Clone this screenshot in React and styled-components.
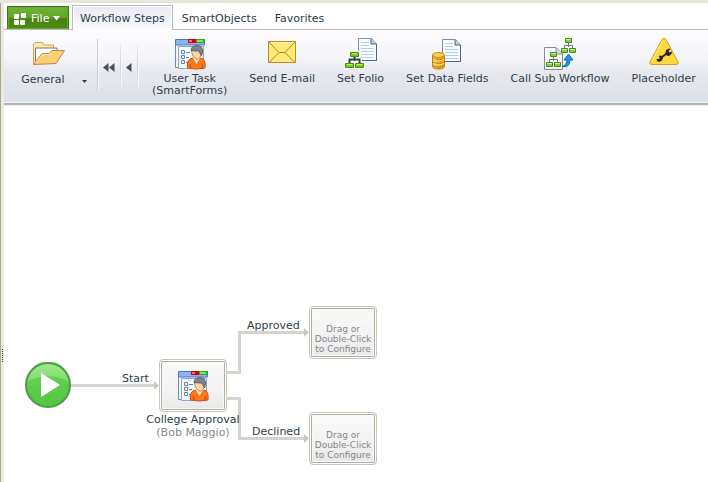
import React from "react";
import styled, { createGlobalStyle } from "styled-components";

const GlobalStyle = createGlobalStyle`
  * { box-sizing: border-box; }
  body {
    margin: 0;
    background: #fff;
    color: #2e3d47;
    font: 11px/12px Verdana, "DejaVu Sans", sans-serif;
  }
  button { font: inherit; color: inherit; margin: 0; cursor: pointer; }
`;

const Page = styled.div`
  display: flex;
  min-height: 100vh;
  border-top: 3px solid #e7e6da;
`;

const Splitter = styled.div`
  flex: none;
  display: flex;
  align-items: flex-end;
  width: 4px;
  padding-bottom: 119px;
  background: #ece9df;
  border-left: 1px solid #aaa899;
`;

const Grip = styled.span`
  width: 1px;
  height: 14px;
  margin-left: 1px;
  background: repeating-linear-gradient(#333 0 1px, #ece9df 1px 2px);
`;

const Designer = styled.div`
  flex: 1;
  min-width: 0;
  display: flex;
  flex-direction: column;
`;

const TabBar = styled.nav`
  display: flex;
  align-items: flex-end;
  height: 27px;
  padding-left: 3px;
  border-bottom: 1px solid #b9babb;
`;

const FileButton = styled.button`
  display: flex;
  align-items: center;
  gap: 4px;
  width: 62px;
  height: 23px;
  margin-right: 3px;
  padding: 1px 5px 0;
  color: #fff;
  border: 1px solid #3f7d16;
  border-bottom: 0;
  background: linear-gradient(#72b23a, #62a52b 45%, #478411 55%, #4b8814);
  box-shadow: inset 0 0 0 1px #65a72f;
`;

const Tab = styled.button`
  height: ${(p) => (p.$active ? 25 : 24)}px;
  margin-bottom: ${(p) => (p.$active ? -1 : 0)}px;
  padding: 2px ${(p) => (p.$active ? 7 : 8)}px 0;
  border: 1px solid ${(p) => (p.$active ? "#b9babb" : "transparent")};
  border-bottom: 0;
  background: ${(p) => (p.$active ? "linear-gradient(#e8eaf1, #fafaff)" : "none")};
  box-shadow: ${(p) => (p.$active ? "inset 0 0 0 1px #fff" : "none")};
`;

const Ribbon = styled.div`
  display: flex;
  align-items: flex-start;
  height: 75px;
  padding-top: 8px;
  overflow: hidden;
  background: linear-gradient(#fffcff, #f4f5f9 38%, #e6e8ee 60%, #dce1e7);
  border-bottom: 2px solid #b5b5b6;
  box-shadow: inset 0 -1px #f5f5f6, 0 1px #ededed;
`;

const Category = styled.button`
  display: grid;
  grid-template-columns: 78px 1fr;
  grid-template-rows: 33px 12px;
  align-items: start;
  justify-items: center;
  width: 93px;
  padding: 3px 0 0;
  border: 0;
  background: none;
  svg:first-child { grid-column: 1 / -1; justify-self: start; margin-left: 28px; }
`;

const CategoryArrow = styled.svg`
  align-self: center;
  justify-self: start;
  margin-top: 3px;
`;

const Divider = styled.span`
  width: 1px;
  height: ${(p) => (p.$tall ? 52 : 44)}px;
  margin-top: ${(p) => (p.$tall ? 1 : 5)}px;
  background: ${(p) =>
    p.$tall ? "#c5ced5" : "linear-gradient(#eef0f5, #cbd2d9 50%, #e3e6ec)"};
  box-shadow: 1px 0 #f8f8fb;
`;

const Scroll = styled.button`
  display: flex;
  align-items: center;
  justify-content: center;
  width: ${(p) => (p.$wide ? 22 : 16)}px;
  height: 58px;
  padding: 0;
  border: 0;
  background: none;
`;

const Tool = styled.button`
  display: flex;
  flex-direction: column;
  align-items: center;
  flex: none;
  padding: 0 10px;
  border: 0;
  background: none;
  line-height: 12px;
  svg { margin-bottom: 3px; }
`;

const Tools = styled.div`
  display: flex;
  align-items: flex-start;
  gap: 2px;
  padding-left: 4px;
`;

const Canvas = styled.main`
  flex: 1;
  position: relative;
  min-height: 370px;
  overflow: hidden;
`;

const Connectors = styled.svg`
  position: absolute;
  inset: 0;
  width: 100%;
  height: 100%;
  overflow: visible;
`;

const Placed = styled.div`
  position: absolute;
  left: ${(p) => p.$x}px;
  top: ${(p) => p.$y}px;
`;

const LineLabel = styled(Placed)`
  white-space: nowrap;
`;

const Caption = styled(Placed)`
  width: 120px;
  text-align: center;
  line-height: 13px;
  small { display: block; font-size: 11px; color: #85898e; }
`;

const StartButton = styled.button`
  display: block;
  padding: 0;
  border: 0;
  background: none;
  svg { display: block; }
`;

const NodeBox = styled.button`
  display: flex;
  align-items: ${(p) => (p.$empty ? "flex-end" : "center")};
  justify-content: center;
  width: 68px;
  height: 53px;
  padding: ${(p) => (p.$empty ? "0 0 4px" : "0")};
  border: 1px solid #c6c6b9;
  border-radius: 4px;
  background: linear-gradient(#fbfafa, #f3f1f2 60%, #ebe7e9);
  box-shadow: inset 0 0 0 1px #fff, inset 0 0 0 2px #aeb09f, inset 0 0 0 3px #f9f8f8;
  color: #85868a;
  font-size: 9px;
  line-height: 10px;
  white-space: nowrap;
`;

function FolderIcon() {
  return (
    <svg width="34" height="25" viewBox="0 0 34 25" aria-hidden="true">
      <path d="M1.500 23V3L3 1.500H10.500L12 4H21.500V9" fill="#ffe6aa" stroke="#dda057" />
      <path d="M3.500 20V7H20.500L25 7V10" fill="#fff" stroke="#6c7890" />
      <path d="M1.500 23.500L10 12.500H17L20 9.500H32.500L24 22.500Z" fill="#f8cf73" stroke="#c98242" strokeLinejoin="round" />
      <path d="M4 21.500L11 13.500H18L21 10.500" fill="none" stroke="#ffe4a0" />
    </svg>
  );
}

function UserTaskIcon() {
  return (
    <svg width="32" height="32" viewBox="0 0 32 32" aria-hidden="true">
      <path d="M1.500 1.500H30.500V7H1.500Z" fill="#8bb2f3" stroke="#4c77c5" />
      <path d="M14 1H22V5H14Z" fill="#d90000" />
      <path d="M15 2H18V4H15Z" fill="#ff6a6a" />
      <path d="M22 1H31V5H22Z" fill="#31a526" />
      <path d="M23 2H29V4H23Z" fill="#8fe066" />
      <path d="M1.500 7V29.500H5" fill="#edf5ff" stroke="#718baf" />
      <path d="M4.500 30.500V8.500H29.500V30.500Z" fill="#f4f8fd" stroke="#91a6c0" />
      <path d="M7.500 12.500H10.500V15.500H7.500ZM7.500 17.500H10.500V20.500H7.500ZM7.500 22.500H10.500V25.500H7.500ZM12 14.500H16M12 19.500H15M12 24.500H14" fill="none" stroke="#6782a7" />
      <path d="M13.500 30Q12 21 19 20L22 23L27 20Q32 21 31 30Q23 32 13.500 30Z" fill="#ff761b" stroke="#cc5212" />
      <path d="M19 20L22.500 26L26 20L24 18H20Z" fill="#fff1df" />
      <path d="M17.500 13Q18 9 23 9Q27 9 28 14Q27 20 23 21.500Q18 19 17.500 13Z" fill="#ffd4a0" stroke="#c58c61" />
      <path d="M17 12.500Q17 8 23 7.500Q29 8 28.500 14L27.500 18L25 13Q20 13 17 12.500Z" fill="#80858b" stroke="#5c6268" />
      <path d="M16 26L17 30M28.500 26L28 30" stroke="#bf480c" />
    </svg>
  );
}

function MailIcon() {
  return (
    <svg width="32" height="32" viewBox="0 0 32 32" aria-hidden="true">
      <path d="M2.500 3.500H29.500V24.500H2.500Z" fill="#ffec77" stroke="#bd8a33" />
      <path d="M3 4L13 14.500H19L29 4M3 24.500L13 14.500M19 14.500L29 24.500" fill="none" stroke="#b67f31" />
      <path d="M4 4.500H28" stroke="#fff4a5" />
    </svg>
  );
}

function Sheet() {
  return (
    <g>
      <path d="M13.500 .500H26.500L31.500 6V22.500H13.500Z" fill="#f9fcff" stroke="#7b8dab" />
      <path d="M31.500 6V22.500H13" fill="none" stroke="#4f6489" />
      <path d="M26 1V6H31" fill="#b9cff0" stroke="#4a6186" />
      <path d="M16 4.500H24M16 7.500H24M16 10.500H29M16 13.500H29M16 16.500H29M16 19.500H29" stroke="#b5cef0" />
    </g>
  );
}

function Tree() {
  return (
    <g>
      <path d="M9.500 17V23M4.500 25V21.500H14.500V25" fill="none" stroke="#34424d" strokeWidth="2" />
      <g fill="#75ce16" stroke="#438a11">
        <path d="M5.500 14.500H13.500V18.500H5.500ZM.500 25.500H8.500V29.500H.500ZM10.500 25.500H18.500V29.500H10.500Z" />
      </g>
      <path d="M7 15.500H12M2 26.500H7M12 26.500H17" stroke="#baf367" />
    </g>
  );
}

function FolioIcon() {
  return (
    <svg width="32" height="32" viewBox="0 0 32 32" aria-hidden="true">
      <Sheet />
      <path d="M4 13H15V20H17V24H20V31H0V20H4Z" fill="#fff" />
      <Tree />
    </svg>
  );
}

function DataIcon() {
  return (
    <svg width="32" height="32" viewBox="0 0 32 32" aria-hidden="true">
      <g transform="translate(-2 1)"><Sheet /></g>
      <path d="M1.500 17V28Q1.500 31 8 31Q13.500 31 13.500 28V17Z" fill="#efa91f" stroke="#c57c10" />
      <path d="M3 18V29M5 19V30" stroke="#ffe58a" />
      <path d="M2 20.500Q8 23.500 13 20.500M2 24.500Q8 27.500 13 24.500M2 28Q8 31 13 28" fill="none" stroke="#c17d12" />
      <path d="M2 21.500Q8 24.500 13 21.500M2 25.500Q8 28.500 13 25.500" fill="none" stroke="#ffe080" />
      <ellipse cx="7.500" cy="17" rx="6" ry="2.500" fill="#ffcf52" stroke="#ca8716" />
    </svg>
  );
}

function SmallTree() {
  return (
    <g>
      <path d="M7.500 4V9M3.500 11V7.500H11.500V11" fill="none" stroke="#657479" />
      <path d="M4.500 .500H10.500V4.500H4.500ZM.500 10.500H6.500V14.500H.500ZM8.500 10.500H14.500V14.500H8.500Z" fill="#86cf3b" stroke="#438b23" />
      <path d="M5 1.500H10M1 11.500H6M9 11.500H14" stroke="#c6f392" />
    </g>
  );
}

function SubWorkflowIcon() {
  return (
    <svg width="32" height="32" viewBox="0 0 32 32" aria-hidden="true">
      <path d="M.500 9.500H12L18.500 16V31.500H.500Z" fill="#f8f9fb" stroke="#858c98" />
      <path d="M12 10V16H18" fill="#d5d9df" stroke="#858c98" />
      <g transform="translate(17 0)"><SmallTree /></g>
      <g transform="translate(2 14)"><SmallTree /></g>
      <path d="M18 28.500Q23 27 23 22H20L24.500 16L29 22H26Q26 30 18 28.500Z" fill="#2492dc" stroke="#0870b3" strokeLinejoin="round" />
    </svg>
  );
}

function PlaceholderIcon() {
  return (
    <svg width="32" height="32" viewBox="0 0 32 32" aria-hidden="true">
      <path d="M14 1.500Q16 -1 18 1.500L30 24Q31 26.500 28 26.500H4Q1 26.500 2 24Z" fill="#ffd83e" stroke="#d8a019" strokeLinejoin="round" />
      <path d="M14.500 3L4 23.500" stroke="#fff08b" />
      <path d="M12 20.500L20 14.500" stroke="#23272b" strokeWidth="2" />
      <path d="M8.500 21L11 21L12 19.500L10.500 18L13 17.500L15 19.500L14 22.500L11 24L9 23ZM17.500 15L18 12L21 10.500L22.500 11L20.500 13L21.500 14.500L24 13.500L23.500 16L21 18L18.500 17.500Z" fill="#23272b" />
    </svg>
  );
}

function FileIcon() {
  return (
    <svg width="14" height="14" viewBox="0 0 14 14" aria-hidden="true">
      <g fill="#fff">
        <rect x="1" y="2" width="5" height="5" rx="1" />
        <rect x="8" y="1" width="5" height="5" rx="1" />
        <rect x="1" y="8" width="5" height="5" rx="1" />
        <rect x="7" y="8" width="5" height="5" rx="1" />
      </g>
    </svg>
  );
}

const tools = [
  { name: "User Task\n(SmartForms)", Icon: UserTaskIcon },
  { name: "Send E-mail", Icon: MailIcon },
  { name: "Set Folio", Icon: FolioIcon },
  { name: "Set Data Fields", Icon: DataIcon },
  { name: "Call Sub Workflow", Icon: SubWorkflowIcon },
  { name: "Placeholder", Icon: PlaceholderIcon },
];

const ToolName = styled.span`
  white-space: pre;
`;

function EmptyNode({ x, y }) {
  return (
    <Placed $x={x} $y={y}>
      <NodeBox $empty>
        <span>Drag or<br />Double-Click<br />to Configure</span>
      </NodeBox>
    </Placed>
  );
}

export default function App() {
  return (
    <Page>
      <GlobalStyle />
      <Splitter><Grip /></Splitter>
      <Designer>
        <TabBar>
          <FileButton>
            <FileIcon />
            <span>File</span>
            <svg width="8" height="5" viewBox="0 0 8 5" aria-hidden="true"><path d="M0 0H7L3.500 4.500Z" fill="#fff" /></svg>
          </FileButton>
          <Tab $active>Workflow Steps</Tab>
          <Tab>SmartObjects</Tab>
          <Tab>Favorites</Tab>
        </TabBar>
        <Ribbon>
          <Category>
            <FolderIcon />
            <span>General</span>
            <CategoryArrow width="5" height="3" viewBox="0 0 5 3"><path d="M0 0H5L2.500 3Z" fill="#333b42" /></CategoryArrow>
          </Category>
          <Divider $tall />
          <Scroll $wide aria-label="First">
            <svg width="12" height="9" viewBox="0 0 12 9"><path d="M5.500 0V9L0 4.500ZM11.500 0V9L6 4.500Z" fill="#46515a" /></svg>
          </Scroll>
          <Divider />
          <Scroll aria-label="Previous">
            <svg width="6" height="9" viewBox="0 0 6 9"><path d="M5.500 0V9L0 4.500Z" fill="#46515a" /></svg>
          </Scroll>
          <Divider />
          <Tools>
            {tools.map(({ name, Icon }) => (
              <Tool key={name}>
                <Icon />
                <ToolName>{name}</ToolName>
              </Tool>
            ))}
          </Tools>
        </Ribbon>
        <Canvas>
          <Connectors aria-hidden="true">
            <g fill="none" stroke="#d6d2cd" strokeWidth="3">
              <path d="M66 280.500H151" />
              <path d="M223 267.500H235.500V227.500H301" />
              <path d="M223 293.500H235.500V333.500H301" />
            </g>
            <g fill="#cbc8c4">
              <path d="M150 276L155 280.500L150 285Z" />
              <path d="M300 223L305 227.500L300 232Z" />
              <path d="M300 329L305 333.500L300 338Z" />
            </g>
          </Connectors>
          <Placed $x={21} $y={257}>
            <StartButton aria-label="Start">
              <svg width="46" height="46" viewBox="0 0 46 46">
                <defs>
                  <linearGradient id="disc" x2="0" y2="1">
                    <stop stopColor="#6fd45e" /><stop offset="1" stopColor="#52c43f" />
                  </linearGradient>
                  <linearGradient id="gloss" x2="0" y2="1">
                    <stop stopColor="#a5eb92" /><stop offset="1" stopColor="#7dd96d" />
                  </linearGradient>
                </defs>
                <circle cx="23" cy="23" r="22" fill="url(#disc)" />
                <path d="M2 20A21 21 0 0 1 44 20Q23 8 2 20Z" fill="url(#gloss)" />
                <circle cx="23" cy="23" r="22" fill="none" stroke="#509b48" strokeWidth="2" />
                <path d="M16 11V35L35 23Z" fill="#fff" />
              </svg>
            </StartButton>
          </Placed>
          <LineLabel $x={118} $y={268}>Start</LineLabel>
          <LineLabel $x={243} $y={215}>Approved</LineLabel>
          <LineLabel $x={248} $y={321}>Declined</LineLabel>
          <Placed $x={155} $y={254}>
            <NodeBox aria-label="College Approval"><UserTaskIcon /></NodeBox>
          </Placed>
          <Caption $x={129} $y={308}>College Approval<small>(Bob Maggio)</small></Caption>
          <EmptyNode x={305} y={201} />
          <EmptyNode x={305} y={307} />
        </Canvas>
      </Designer>
    </Page>
  );
}
